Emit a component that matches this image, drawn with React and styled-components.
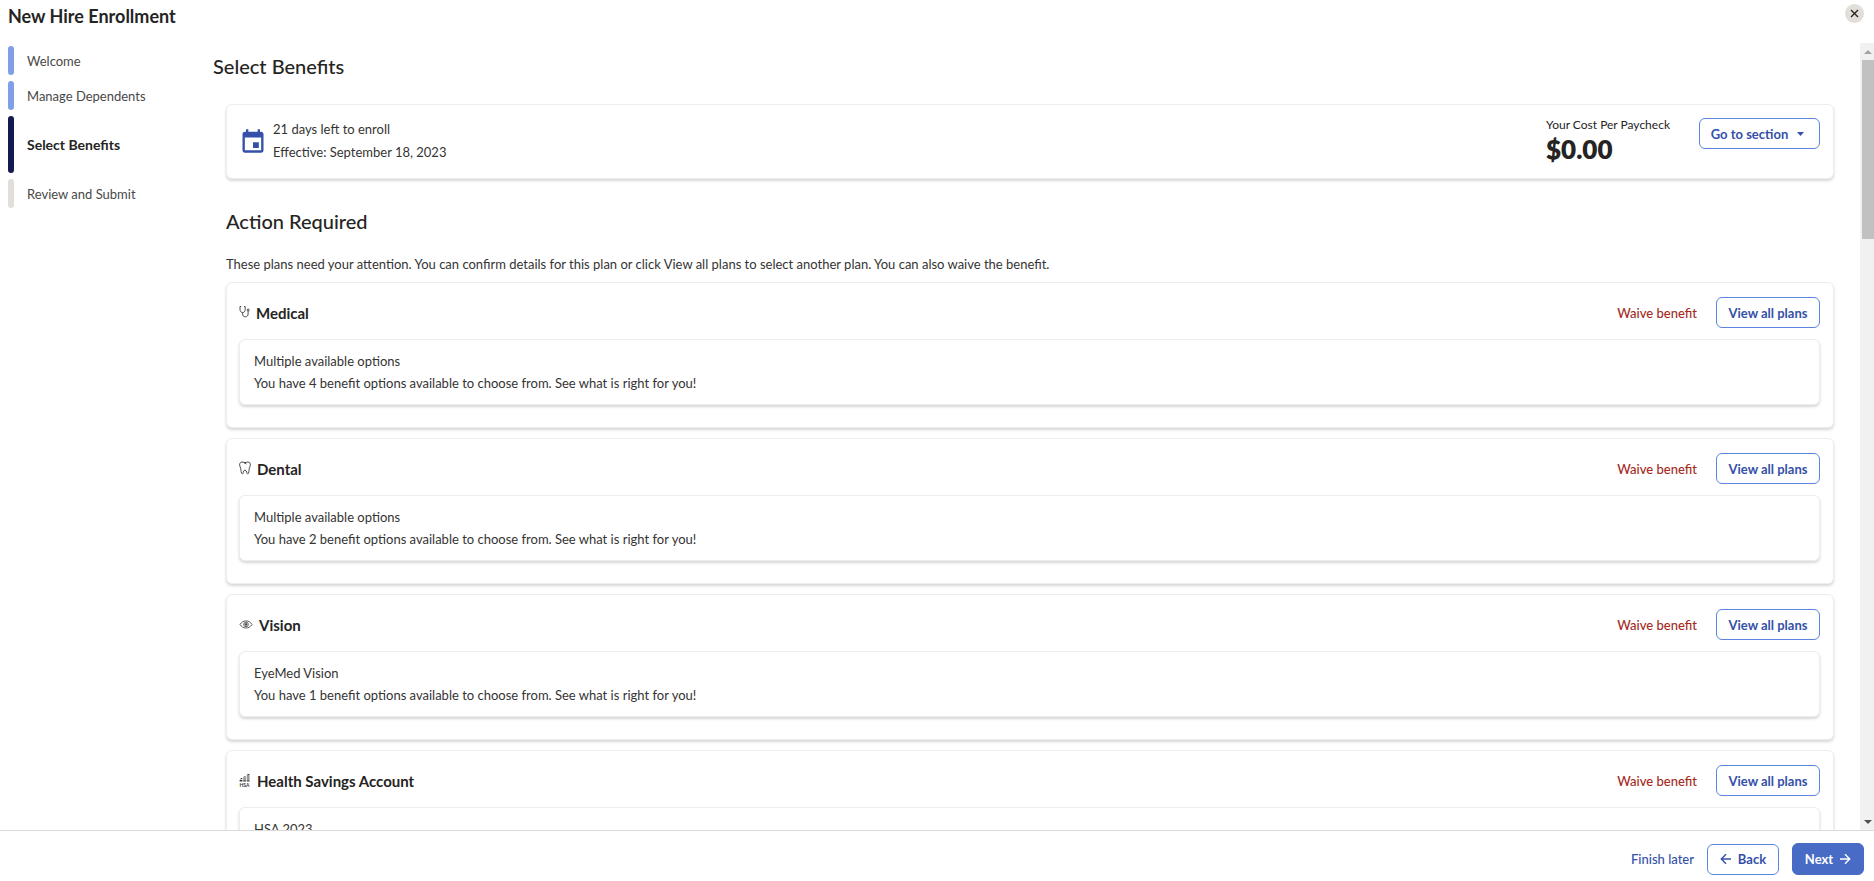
/**
 *
 * BenefitsEnrollmentPage
 *
 */

import React from 'react';
import styled, { createGlobalStyle, css } from 'styled-components';

const GlobalStyle = createGlobalStyle`
  * {
    box-sizing: border-box;
  }
  body {
    margin: 0;
    background: #fff;
    color: #252423;
    font-family: Lato, 'Liberation Sans', sans-serif;
    font-size: 13px;
    line-height: 22px;
  }
  button {
    font-family: inherit;
    cursor: pointer;
  }
`;

const Page = styled.div`
  display: flex;
  flex-direction: column;
  height: 100vh;
  overflow: hidden;
`;

const PageHeader = styled.header`
  display: flex;
  flex: none;
  align-items: flex-start;
  justify-content: space-between;
  height: 43px;
  padding: 4px 10px 0 8px;
`;

const PageTitle = styled.h1`
  margin: 0;
  font-size: 18px;
  font-weight: 700;
  line-height: 24px;
`;

const CloseButton = styled.button`
  display: flex;
  align-items: center;
  justify-content: center;
  width: 19px;
  height: 19px;
  padding: 0;
  border: 0;
  border-radius: 50%;
  background: #e2dfda;
  color: #252423;
`;

const PageBody = styled.div`
  display: flex;
  flex: 1;
  min-height: 0;
`;

const Steps = styled.ol`
  display: flex;
  flex: none;
  flex-direction: column;
  gap: 6px;
  width: 205px;
  margin: 0;
  padding: 3px 0 0 8px;
  list-style: none;
`;

const stepColors = {
  done: '#7f9fe8',
  current: '#121a4f',
  upcoming: '#e2dfda',
};

const Step = styled.li`
  display: flex;
  align-items: center;
  gap: 13px;
  height: ${props => (props.$status === 'current' ? 57 : 29)}px;
  color: ${props => (props.$status === 'current' ? '#252423' : '#4a4847')};
  font-size: ${props => (props.$status === 'current' ? 14 : 13)}px;
  font-weight: ${props => (props.$status === 'current' ? 700 : 400)};

  &::before {
    content: '';
    width: 6px;
    height: 100%;
    border-radius: 3px;
    background: ${props => stepColors[props.$status]};
  }
`;

const Content = styled.main`
  flex: 1;
  min-width: 0;
  padding: 7px 26px 0 8px;
  overflow: hidden;
`;

const ContentTitle = styled.h2`
  margin: 0;
  font-size: 20px;
  font-weight: 500;
  line-height: 32px;
`;

const Sections = styled.div`
  padding: 22px 0 0 13px;
`;

const cardStyle = css`
  border: 1px solid #eeedec;
  border-radius: 6px;
  background: #fff;
  box-shadow: 0 2px 3px rgba(0, 0, 0, 0.16);
`;

const SummaryCard = styled.section`
  ${cardStyle}
  display: flex;
  align-items: flex-start;
  height: 75px;
  padding: 13px 13px 13px 12px;
`;

const Deadline = styled.div`
  display: flex;
  flex: 1;
  align-items: center;
  gap: 6px;
`;

const DeadlineText = styled.p`
  margin: 0;
  color: #353433;
  line-height: 23px;
`;

const Cost = styled.div`
  width: 153px;
`;

const CostLabel = styled.div`
  font-size: 12px;
  line-height: 13px;
`;

const CostAmount = styled.div`
  font-size: 26px;
  font-weight: 800;
  line-height: 36px;
`;

const SectionTitle = styled.h3`
  margin: 26px 0 0;
  font-size: 20px;
  font-weight: 500;
  line-height: 32px;
`;

const SectionText = styled.p`
  margin: 16px 0 7px;
  color: #353433;
`;

const BenefitList = styled.div`
  display: flex;
  flex-direction: column;
  gap: 10px;
`;

const BenefitCard = styled.section`
  ${cardStyle}
  padding: 14px 13px 22px 12px;
`;

const BenefitHeader = styled.div`
  display: flex;
  align-items: center;
  gap: 19px;
  margin-bottom: 11px;
`;

const BenefitName = styled.h4`
  display: flex;
  flex: 1;
  align-items: center;
  gap: 6px;
  margin: 0;
  font-size: 15px;
  font-weight: 700;
`;

const OptionCard = styled.div`
  ${cardStyle}
  height: 66px;
  padding: 10px 14px;
`;

const OptionText = styled.p`
  margin: 0;
  color: #353433;
`;

const OutlineButton = styled.button`
  display: inline-flex;
  align-items: center;
  justify-content: center;
  gap: 6px;
  width: ${props => props.$width}px;
  height: 31px;
  padding: 0;
  border: 1px solid #5b86dd;
  border-radius: 6px;
  background: #fff;
  color: #3450a8;
  font-size: 13px;
  font-weight: 700;
`;

const PrimaryButton = styled(OutlineButton)`
  height: 32px;
  border-color: #486bc6;
  background: #486bc6;
  color: #fff;
`;

const TextButton = styled.button`
  padding: 0;
  border: 0;
  background: none;
  color: ${props => (props.$danger ? '#a52a1e' : '#3450a8')};
  font-size: 13px;
  font-weight: 500;
`;

const ScrollTrack = styled.div`
  display: flex;
  flex: none;
  flex-direction: column;
  align-items: flex-end;
  width: 14px;
  background: #f1f1f1;
`;

const ScrollArrow = styled.div`
  display: flex;
  align-items: center;
  justify-content: center;
  width: 12px;
  height: 17px;

  &::before {
    content: '';
    border: 4px solid transparent;
    border-top-width: ${props => (props.$down ? 4 : 0)}px;
    border-bottom-width: ${props => (props.$down ? 0 : 4)}px;
    border-top-color: #505050;
    border-bottom-color: #a3a3a3;
  }
`;

const ScrollThumb = styled.div`
  width: 12px;
  height: 179px;
  margin-bottom: auto;
  background: #c1c1c1;
`;

const PageFooter = styled.footer`
  display: flex;
  flex: none;
  align-items: center;
  justify-content: flex-end;
  gap: 13px;
  height: 51px;
  padding: 6px 10px 0 0;
  border-top: 1px solid #dcdad8;
`;

function CalendarIcon() {
  return (
    <svg width="28" height="28" viewBox="0 0 24 24" fill="#3450a8" aria-hidden>
      <path d="M17 13h-5v5h5v-5zM16 2v2H8V2H6v2H5c-1.110 0-1.990.9-1.990 2L3 20c0 1.100.890 2 2 2h14c1.100 0 2-.9 2-2V6c0-1.100-.9-2-2-2h-1V2h-2zm3 18H5V9h14v11z" />
    </svg>
  );
}

function CloseIcon() {
  return (
    <svg width="9" height="9" viewBox="0 0 9 9" stroke="currentColor" strokeWidth="1.4" aria-hidden>
      <path d="M1 1l7 7M8 1L1 8" />
    </svg>
  );
}

function CaretIcon() {
  return (
    <svg width="14" height="12" viewBox="0 0 14 12" fill="currentColor" aria-hidden>
      <path d="M3 4h7L6.500 8z" />
    </svg>
  );
}

function ArrowIcon({ left }) {
  return (
    <svg width="12" height="12" viewBox="0 0 12 12" fill="none" stroke="currentColor" strokeWidth="1.4" aria-hidden>
      <path d={left ? 'M11 6H1.5M6 1.3L1.3 6 6 10.7' : 'M1 6h9.5M6 1.3L10.7 6 6 10.7'} />
    </svg>
  );
}

function MedicalIcon() {
  return (
    <svg width="11" height="16" viewBox="0 0 11 16" fill="none" stroke="#3a3938" strokeWidth="0.9" aria-hidden>
      <path d="M2.200 1.500H1v2.900c0 2 1 3.100 2.600 3.100s2.600-1.100 2.600-3.100V1.500H5M3.600 7.500v1.400c0 1.900 1 2.900 2.700 2.900s2.800-1 2.800-2.900V6" />
      <circle cx="9.200" cy="5" r="1" />
    </svg>
  );
}

function DentalIcon() {
  return (
    <svg width="12" height="16" viewBox="0 0 12 16" fill="none" stroke="#3a3938" strokeWidth="0.9" aria-hidden>
      <path d="M3 1C1.500 1 .6 2.200.6 3.800c0 1.400.8 2.200 1.100 3.500.4 1.800.3 5.700 1.600 5.700 1.100 0 .8-3.900 2.700-3.900s1.600 3.900 2.700 3.900c1.300 0 1.200-3.900 1.600-5.700.3-1.300 1.100-2.100 1.100-3.500C11.400 2.200 10.500 1 9 1 7.800 1 7.200 1.600 6 1.600S4.200 1 3 1zM4.600 1.400L7.400 3" />
    </svg>
  );
}

function VisionIcon() {
  return (
    <svg width="14" height="14" viewBox="0 0 14 14" fill="none" stroke="#3a3938" strokeWidth="0.8" aria-hidden>
      <path d="M1 6.500C2.500 4 4.500 2.900 7 2.900s4.500 1.100 6 3.600c-1.500 2.400-3.500 3.500-6 3.500S2.500 8.900 1 6.500z" />
      <circle cx="7" cy="6.400" r="2.300" />
      <circle cx="7" cy="6.400" r="0.900" fill="#3a3938" />
    </svg>
  );
}

function SavingsIcon() {
  return (
    <svg width="12" height="16" viewBox="0 0 12 16" fill="#3a3938" aria-hidden>
      <path d="M.8 6.200h2.500V5H2.200zM4 4.600h2.800V3.400H5zM7.500 2.600h3V.8L8.200 1.500zM.6 7h2.800v1.500H.6zM4.200 5.400h2.700v1.200H4.200zM4.200 7.300h2.700v1.200H4.200zM7.700 3.500h2.900v1.100H7.700zM7.700 5.400h2.900v1.200H7.700zM7.700 7.300h2.900v1.200H7.700z" />
      <text x="0.500" y="13.600" fontSize="5">
        HSA
      </text>
    </svg>
  );
}

const steps = [
  { title: 'Welcome', status: 'done' },
  { title: 'Manage Dependents', status: 'done' },
  { title: 'Select Benefits', status: 'current' },
  { title: 'Review and Submit', status: 'upcoming' },
];

const benefits = [
  {
    name: 'Medical',
    Icon: MedicalIcon,
    plan: 'Multiple available options',
    count: 4,
  },
  {
    name: 'Dental',
    Icon: DentalIcon,
    plan: 'Multiple available options',
    count: 2,
  },
  { name: 'Vision', Icon: VisionIcon, plan: 'EyeMed Vision', count: 1 },
  {
    name: 'Health Savings Account',
    Icon: SavingsIcon,
    plan: 'HSA 2023',
    count: 1,
  },
];

function Benefit({ name, Icon, plan, count }) {
  return (
    <BenefitCard>
      <BenefitHeader>
        <BenefitName>
          <Icon />
          {name}
        </BenefitName>
        <TextButton type="button" $danger>
          Waive benefit
        </TextButton>
        <OutlineButton type="button" $width={104}>
          View all plans
        </OutlineButton>
      </BenefitHeader>
      <OptionCard>
        <OptionText>{plan}</OptionText>
        <OptionText>
          You have {count} benefit options available to choose from. See what is
          right for you!
        </OptionText>
      </OptionCard>
    </BenefitCard>
  );
}

export default function App() {
  return (
    <Page>
      <GlobalStyle />
      <PageHeader>
        <PageTitle>New Hire Enrollment</PageTitle>
        <CloseButton type="button" aria-label="Close">
          <CloseIcon />
        </CloseButton>
      </PageHeader>
      <PageBody>
        <Steps>
          {steps.map(step => (
            <Step key={step.title} $status={step.status}>
              {step.title}
            </Step>
          ))}
        </Steps>
        <Content>
          <ContentTitle>Select Benefits</ContentTitle>
          <Sections>
            <SummaryCard>
              <Deadline>
                <CalendarIcon />
                <div>
                  <DeadlineText>21 days left to enroll</DeadlineText>
                  <DeadlineText>Effective: September 18, 2023</DeadlineText>
                </div>
              </Deadline>
              <Cost>
                <CostLabel>Your Cost Per Paycheck</CostLabel>
                <CostAmount>$0.00</CostAmount>
              </Cost>
              <OutlineButton type="button" $width={121}>
                Go to section
                <CaretIcon />
              </OutlineButton>
            </SummaryCard>
            <SectionTitle>Action Required</SectionTitle>
            <SectionText>
              These plans need your attention. You can confirm details for this
              plan or click View all plans to select another plan. You can also
              waive the benefit.
            </SectionText>
            <BenefitList>
              {benefits.map(benefit => (
                <Benefit key={benefit.name} {...benefit} />
              ))}
            </BenefitList>
          </Sections>
        </Content>
        <ScrollTrack>
          <ScrollArrow />
          <ScrollThumb />
          <ScrollArrow $down />
        </ScrollTrack>
      </PageBody>
      <PageFooter>
        <TextButton type="button">Finish later</TextButton>
        <OutlineButton type="button" $width={72}>
          <ArrowIcon left />
          Back
        </OutlineButton>
        <PrimaryButton type="button" $width={72}>
          Next
          <ArrowIcon />
        </PrimaryButton>
      </PageFooter>
    </Page>
  );
}
